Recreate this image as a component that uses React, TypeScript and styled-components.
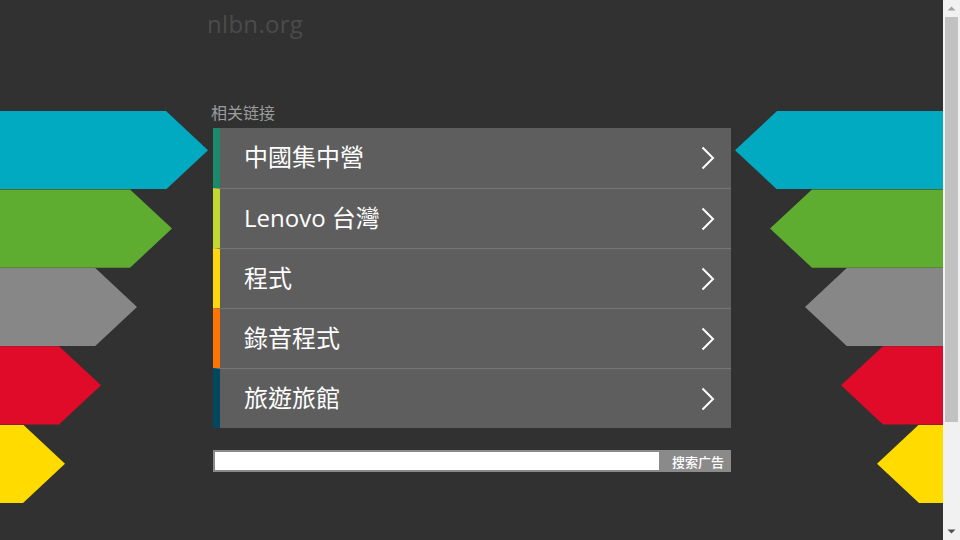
import React from 'react';
import styled, { createGlobalStyle } from 'styled-components';

const links = [
  { label: '中國集中營', bar: '#1b8a6c' },
  { label: 'Lenovo 台灣', bar: '#c2d82f' },
  { label: '程式', bar: '#ffd70a' },
  { label: '錄音程式', bar: '#ff7300' },
  { label: '旅遊旅館', bar: '#00485f' },
];

const arrows = [
  { color: '#01aac0', left: 208, right: 208 },
  { color: '#5fad30', left: 172, right: 173 },
  { color: '#878787', left: 137, right: 138 },
  { color: '#e00a29', left: 101, right: 102 },
  { color: '#ffdb00', left: 65, right: 66 },
];

const App: React.FC = () => {
  return (
    <>
      <GlobalStyle />
      <Page>
        <Side>
          {arrows.map((a) => (
            <Arrow key={a.color} $color={a.color} $width={a.left} />
          ))}
        </Side>

        <Main>
          <Logo>nlbn.org</Logo>
          <Label>相关链接</Label>
          <List>
            {links.map((l) => (
              <Row key={l.label} $bar={l.bar}>
                <RowText>{l.label}</RowText>
                <Chevron width="14" height="24" viewBox="0 0 14 24">
                  <polyline points="1.5,1.5 12,12 1.5,22.5" />
                </Chevron>
              </Row>
            ))}
          </List>
          <Search>
            <SearchInput type="text" />
            <SearchButton type="button">搜索广告</SearchButton>
          </Search>
        </Main>

        <Side $right>
          {arrows.map((a) => (
            <Arrow key={a.color} $color={a.color} $width={a.right} $flip />
          ))}
        </Side>

        {/* page scrollbar */}
        <ScrollTrack>
          <ScrollArrow viewBox="0 0 17 17" $color="#a3a3a3">
            <polygon points="4.5,10.5 8.5,6.5 12.5,10.5" />
          </ScrollArrow>
          <Thumb />
          <ScrollArrow viewBox="0 0 17 17" $color="#505050" $bottom>
            <polygon points="4.5,6.5 8.5,10.5 12.5,6.5" />
          </ScrollArrow>
        </ScrollTrack>
      </Page>
    </>
  );
};

const GlobalStyle = createGlobalStyle`
  html, body {
    margin: 0;
    padding: 0;
    background: #313131;
    overflow: hidden;
  }
  body {
    font-family: "Open Sans", "Noto Sans CJK TC", sans-serif;
  }
`;

const Page = styled.div`
  display: grid;
  grid-template-columns: 213px 518px 1fr 17px;
  height: 540px;
`;

const Side = styled.div<{ $right?: boolean }>`
  display: flex;
  flex-direction: column;
  align-items: ${(p) => (p.$right ? 'flex-end' : 'flex-start')};
  padding-top: 111px;
`;

const Arrow = styled.div<{ $color: string; $width: number; $flip?: boolean }>`
  flex: none;
  width: ${(p) => p.$width}px;
  height: 78.4px;
  background: ${(p) => p.$color};
  clip-path: ${(p) =>
    p.$flip
      ? 'polygon(42px 0, 100% 0, 100% 100%, 42px 100%, 0 50%)'
      : 'polygon(0 0, calc(100% - 42px) 0, 100% 50%, calc(100% - 42px) 100%, 0 100%)'};
`;

const Main = styled.div`
  display: flex;
  flex-direction: column;
`;

const Logo = styled.div`
  margin: 9px 0 0 -6px;
  font-family: "Open Sans", sans-serif;
  font-size: 24px;
  font-weight: 500;
  line-height: 30px;
  letter-spacing: 0.3px;
  color: #4b4b4b;
`;

const Label = styled.div`
  margin: 63px 0 6px -2px;
  font-family: "Noto Sans CJK SC", sans-serif;
  font-size: 16px;
  line-height: 20px;
  color: #9c9c9c;
`;

const List = styled.div`
  display: flex;
  flex-direction: column;
`;

const Row = styled.div<{ $bar: string }>`
  display: flex;
  align-items: center;
  justify-content: space-between;
  height: 60px;
  box-sizing: border-box;
  padding: 0 16px 2px 24px;
  background: #5e5e5e;
  border-left: 7px solid ${(p) => p.$bar};
  & + & {
    border-top: 1px solid #767676;
  }
`;

const RowText = styled.span`
  font-family: "Open Sans", "Noto Sans CJK TC", sans-serif;
  font-size: 24px;
  line-height: 32px;
  color: #ffffff;
`;

const Chevron = styled.svg`
  fill: none;
  stroke: #ffffff;
  stroke-width: 2;
  margin-top: 2px;
`;

const Search = styled.div`
  display: flex;
  height: 22px;
  margin-top: 22px;
  background: #8a8a8a;
`;

const SearchInput = styled.input`
  flex: 1;
  margin: 0;
  padding: 0 4px;
  border: 2px solid #8a8a8a;
  border-right: none;
  background: #ffffff;
  outline: none;
`;

const SearchButton = styled.button`
  width: 72px;
  margin: 0;
  padding: 0 0 0 6px;
  border: none;
  background: #8a8a8a;
  color: #ffffff;
  font-family: "Noto Sans CJK SC", sans-serif;
  font-weight: 500;
  font-size: 13px;
`;

const ScrollTrack = styled.div`
  display: flex;
  flex-direction: column;
  background: #f1f1f1;
`;

const ScrollArrow = styled.svg<{ $color: string; $bottom?: boolean }>`
  flex: none;
  width: 17px;
  height: 17px;
  margin-top: ${(p) => (p.$bottom ? 'auto' : '0')};
  fill: ${(p) => p.$color};
`;

const Thumb = styled.div`
  flex: none;
  height: 405px;
  margin: 0 2px;
  background: #c1c1c1;
`;

export default App;
